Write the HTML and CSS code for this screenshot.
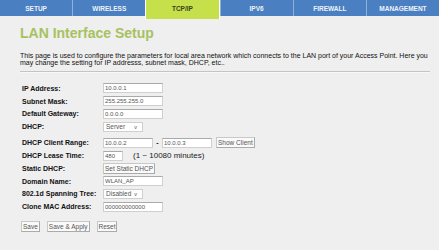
FILE: index.html
```html
<!DOCTYPE html>
<html lang="en">
    <head>
        <meta charset="utf-8"/>
        <title>LAN Interface Setup</title>
        <link rel="stylesheet" href="styles.css">
    </head>
    <body>
        <!-- Top menu -->
        <div class="menu">
            <div class="tab">SETUP</div>
            <div class="tab">WIRELESS</div>
            <div class="tab active">TCP/IP</div>
            <div class="tab">IPV6</div>
            <div class="tab">FIREWALL</div>
            <div class="tab">MANAGEMENT</div>
        </div>

        <div class="content">
            <h1>LAN Interface Setup</h1>
            <p class="intro">This page is used to configure the parameters for local area network which connects to the LAN port of your Access Point. Here you may change the setting for IP addresss, subnet mask, DHCP, etc..</p>
            <hr>

            <table class="form">
                <tr><td class="lbl">IP Address:</td><td><input class="txt" value="10.0.0.1"></td></tr>
                <tr><td class="lbl">Subnet Mask:</td><td><input class="txt" value="255.255.255.0"></td></tr>
                <tr><td class="lbl">Default Gateway:</td><td><input class="txt" value="0.0.0.0"></td></tr>
                <tr><td class="lbl">DHCP:</td><td><span class="sel">Server<i>v</i></span></td></tr>
                <tr class="gap"><td class="lbl">DHCP Client Range:</td>
                    <td><input class="txt short" value="10.0.0.2"><b class="dash">-</b><input class="txt short" value="10.0.0.3"><button class="btn client">Show Client</button></td></tr>
                <tr><td class="lbl">DHCP Lease Time:</td><td><input class="txt tiny" value="480"><span class="note">(1 ~ 10080 minutes)</span></td></tr>
                <tr><td class="lbl">Static DHCP:</td><td><button class="btn">Set Static DHCP</button></td></tr>
                <tr><td class="lbl">Domain Name:</td><td><input class="txt" value="WLAN_AP"></td></tr>
                <tr><td class="lbl">802.1d Spanning Tree:</td><td><span class="sel">Disabled<i>v</i></span></td></tr>
                <tr><td class="lbl">Clone MAC Address:</td><td><input class="txt" value="000000000000"></td></tr>
            </table>

            <div class="actions">
                <button class="btn">Save</button>
                <button class="btn">Save &amp; Apply</button>
                <button class="btn">Reset</button>
            </div>
        </div>
    </body>
</html>
```

FILE: styles.css
```css
body {
    margin: 0;
    background-color: #efefef;
    font-family: "Liberation Sans", Arial, sans-serif;
    font-size: 7px;
    color: #111;
}

.menu {
    display: flex;
    height: 16px;
    background-color: #4a7fc1;
}

.tab {
    flex: 1;
    height: 16px;
    line-height: 17px;
    text-align: center;
    color: #eef3fa;
    font-size: 6.5px;
    font-weight: bold;
    border-left: 1px solid #8fb0d8;
}

.tab:first-child {
    border-left: none;
}

.tab.active {
    background-color: #c6e04b;
    color: #3a4020;
    height: 19px;
    border-left: 1px solid #fff;
    border-right: 1px solid #fff;
}

.content {
    padding: 0 9px 0 20px;
}

h1 {
    color: #a8c160;
    font-size: 14px;
    margin: 9px 0 11px 0;
}

.intro {
    margin: 0;
    line-height: 7px;
}

hr {
    border: none;
    border-top: 1px solid #c4c4c4;
    border-bottom: 1px solid #f8f8f8;
    margin: 5px 0 9px 0;
}

.form {
    border-collapse: collapse;
    margin-left: 2px;
}

.form td {
    padding: 0;
    height: 12.8px;
    vertical-align: middle;
}

.form .lbl {
    font-weight: bold;
    width: 81px;
}

.form tr.gap td {
    height: 13px;
    padding-top: 3px;
}

.txt {
    box-sizing: border-box;
    width: 60px;
    height: 10px;
    font-family: inherit;
    font-size: 6px;
    padding: 0 1px;
    border: 1px solid #cfcfcf;
    border-top-color: #a9a9a9;
    background: #fff;
    color: #555;
    margin: 0;
    vertical-align: middle;
}

.txt.short {
    width: 50px;
}

.txt.tiny {
    width: 20px;
}

.dash {
    display: inline-block;
    width: 9px;
    text-align: center;
    vertical-align: middle;
}

.note {
    font-size: 8px;
    margin-left: 10px;
    vertical-align: middle;
    color: #222;
}

.sel {
    display: inline-block;
    box-sizing: border-box;
    width: 40px;
    height: 10px;
    line-height: 8px;
    font-size: 6.5px;
    padding: 0 2px;
    border: 1px solid #cfcfcf;
    background: #fff;
    color: #555;
    vertical-align: middle;
}

.sel i {
    float: right;
    font-style: normal;
    font-size: 5.5px;
    margin-right: 3px;
}

.btn {
    box-sizing: border-box;
    height: 11px;
    font-family: inherit;
    font-size: 6.5px;
    padding: 0 1px;
    border: 1px solid #c8c8c8;
    border-right-color: #aaa;
    border-bottom-color: #aaa;
    background: #fafafa;
    color: #555;
    margin: 0;
    vertical-align: middle;
}

.btn.client {
    margin-left: 4px;
}

.actions {
    display: flex;
    gap: 7px;
    margin: 8px 0 0 1px;
}
```
